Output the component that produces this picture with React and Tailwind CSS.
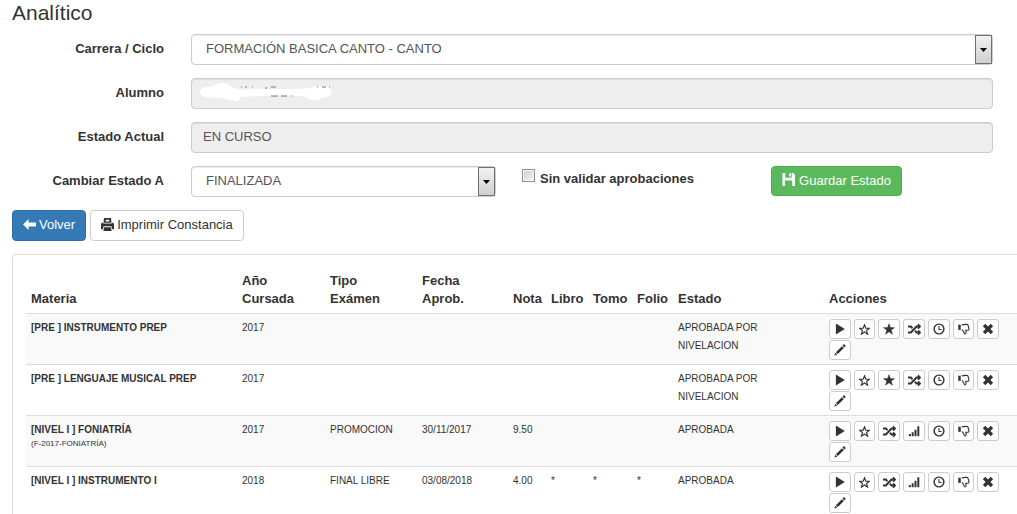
import React from "react";
import { FaRandom } from "react-icons/fa";

const Icon = ({ box = "0 0 14 14", size = "size-3", children }) => (
  <svg viewBox={box} className={`${size} shrink-0`} fill="currentColor" aria-hidden="true">
    {children}
  </svg>
);

const STAR = "M7 .8 8.6 5.3 13.4 5.4 9.6 8.3 11 13 7 10.2 3 13 4.4 8.3 .6 5.4 5.4 5.3Z";

const ICONS = {
  play: (
    <Icon>
      <path d="M2.200 .6 12.600 7 2.200 13.400Z" />
    </Icon>
  ),
  starEmpty: (
    <Icon size="size-[11px]">
      <path d={STAR} fill="none" stroke="currentColor" strokeWidth="1.400" />
    </Icon>
  ),
  star: (
    <Icon>
      <path d={STAR} stroke="currentColor" strokeWidth=".6" />
    </Icon>
  ),
  random: <FaRandom className="size-[13px]" aria-hidden="true" />,
  signal: (
    <Icon>
      <path d="M1 10.500h2.300V13H1zM4.300 8.500h2.300V13H4.300zM7.600 5.500h2.300V13H7.600zM10.900 1.500h2.300V13h-2.300z" />
    </Icon>
  ),
  time: (
    <Icon>
      <circle cx="7" cy="7" r="5.700" fill="none" stroke="currentColor" strokeWidth="1.700" />
      <path d="M7 3.500V7.500H10" fill="none" stroke="currentColor" strokeWidth="1.200" />
    </Icon>
  ),
  thumbsDown: (
    <Icon>
      <path d="M.3 2h2.900v6H.3z" />
      <path
        d="M4.500 2.200C6 1.600 7.500 1.500 9.800 1.600 11.600 1.700 12 2.400 11.800 3.500 12.700 4.200 12.700 5 12.300 5.700 13.300 6.600 13 8.500 11.300 8.500H9C9.700 10 9.700 12.600 8.200 12.800 6.800 12.800 7.400 11.200 6.500 10.200 5.700 9.200 5.400 8 4.500 7.700"
        fill="none"
        stroke="currentColor"
        strokeWidth="1.300"
      />
    </Icon>
  ),
  remove: (
    <Icon>
      <path d="M3.800 1 7 4.200 10.200 1 13 3.800 9.800 7 13 10.200 10.200 13 7 9.800 3.800 13 1 10.200 4.200 7 1 3.800Z" />
    </Icon>
  ),
  pencil: (
    <Icon>
      <path d="M.5 13.500 1.500 10.200 3.800 12.500ZM2.200 9.500 9.200 2.500 11.500 4.800 4.500 11.800ZM9.900 1.800 11 .7Q11.600.1 12.300.7L13.300 1.700Q13.900 2.400 13.300 3L12.200 4.100Z" />
    </Icon>
  ),
};

const LABELS = {
  play: "Iniciar",
  starEmpty: "Regularizar",
  star: "Aprobar",
  random: "Equivalencia",
  signal: "Nivelar",
  time: "Historial",
  thumbsDown: "Desaprobar",
  remove: "Eliminar",
  pencil: "Editar",
};

const PRE_ACTIONS = ["play", "starEmpty", "star", "random", "time", "thumbsDown", "remove", "pencil"];
const LEVEL_ACTIONS = ["play", "starEmpty", "random", "signal", "time", "thumbsDown", "remove", "pencil"];

const ROWS = [
  { materia: "[PRE ] INSTRUMENTO PREP", cells: ["2017", "", "", "", "", "", "", "APROBADA POR NIVELACION"], actions: PRE_ACTIONS },
  { materia: "[PRE ] LENGUAJE MUSICAL PREP", cells: ["2017", "", "", "", "", "", "", "APROBADA POR NIVELACION"], actions: PRE_ACTIONS },
  { materia: "[NIVEL I ] FONIATRÍA", nota: "(F-2017-FONIATRÍA)", cells: ["2017", "PROMOCION", "30/11/2017", "9.50", "", "", "", "APROBADA"], actions: LEVEL_ACTIONS },
  { materia: "[NIVEL I ] INSTRUMENTO I", cells: ["2018", "FINAL LIBRE", "03/08/2018", "4.00", "*", "*", "*", "APROBADA"], actions: LEVEL_ACTIONS },
];

const COLUMNS = [
  ["Materia", "w-[211px]"],
  ["Año Cursada", "w-[88px] pr-4"],
  ["Tipo Exámen", "w-[92px] pr-4"],
  ["Fecha Aprob.", "w-[91px] pr-4"],
  ["Nota", "w-[38px]"],
  ["Libro", "w-[42px]"],
  ["Tomo", "w-[44px]"],
  ["Folio", "w-[41px]"],
  ["Estado", "w-[151px]"],
  ["Acciones", ""],
];

const field = "h-[31px] w-full rounded border border-[#ccc] text-[13px] text-[#555] shadow-[inset_0_1px_1px_rgba(0,0,0,0.075)]";

function Field({ id, label, children }) {
  return (
    <div className="flex gap-[27px]">
      <label htmlFor={id} className="w-[152px] shrink-0 pt-1.5 text-right font-bold">
        {label}
      </label>
      <div className="min-w-0 flex-1">{children}</div>
    </div>
  );
}

function Select({ id, value }) {
  return (
    <div className="relative">
      <select id={id} defaultValue={value} className={`${field} block appearance-none bg-white pb-0.5 pl-[14px] pr-6`}>
        <option>{value}</option>
      </select>
      <span className="pointer-events-none absolute inset-y-px right-px flex w-[17px] items-center justify-center border border-[#707070] bg-linear-to-b from-[#f2f2f2] to-[#cfcfcf]">
        <svg viewBox="0 0 7 4" className="h-1 w-[7px]" aria-hidden="true">
          <path d="M0 0h7L3.500 4Z" fill="#000" />
        </svg>
      </span>
    </div>
  );
}

export default function App() {
  return (
    <main className="overflow-hidden bg-white pl-3 font-['Liberation_Sans',Arial,sans-serif] text-[13px] leading-[18px] text-[#333]">
      <h1 className="pt-px text-[21px] leading-6">Analítico</h1>

      <form className="mt-[9px] flex flex-col gap-[13px] pr-6" onSubmit={(e) => e.preventDefault()}>
        <Field id="carrera" label="Carrera / Ciclo">
          <Select id="carrera" value="FORMACIÓN BASICA CANTO - CANTO" />
        </Field>
        <Field id="alumno" label="Alumno">
          <div className="relative">
            <input id="alumno" disabled className={`${field} block bg-[#eee] px-[11px]`} />
            <svg viewBox="0 0 134 20" className="pointer-events-none absolute left-2 top-1 h-5 w-[134px]" aria-hidden="true">
              <path
                d="M1 10Q1 6 6 5Q12 6 16 3Q23 -1 28 2Q33 6 40 7L42 8Q60 6 72 7L90 7Q108 7 114 5Q124 3 130 5Q134 8 132 12Q131 15 125 15Q117 20 111 17Q105 13 98 14Q88 13 82 14L66 14Q54 14 41 15Q41 20 36 19Q26 17 20 16L6 15Q1 14 1 10Z"
                fill="#fff"
              />
              <path d="M42 5h1M46 5h2M53 5h1M66 6h2M72 5h5M118 5h1M123 5h4M130 5h1M72 14h7M82 14h6M92 14h1" stroke="#777" strokeWidth="1" />
            </svg>
          </div>
        </Field>
        <Field id="estado" label="Estado Actual">
          <input id="estado" disabled defaultValue="EN CURSO" className={`${field} block bg-[#eee] px-[11px] pb-0.5`} />
        </Field>
        <Field id="cambiar" label="Cambiar Estado A">
          <div className="grid grid-cols-[305px_223px_auto] items-start gap-x-[26px]">
            <Select id="cambiar" value="FINALIZADA" />
            <label className="flex items-center gap-[5px] pt-[3px] font-bold">
              <input
                type="checkbox"
                className="mb-1.5 size-[13px] appearance-none border border-[#8e8f8f] bg-linear-to-br from-[#c8ccd0] to-[#f6f6f6] shadow-[inset_0_0_0_1px_#f4f4f4] checked:from-[#337ab7] checked:to-[#337ab7]"
              />
              Sin validar aprobaciones
            </label>
            <button type="submit" className="flex h-[30px] w-[131px] items-center justify-center gap-1 rounded border border-[#4cae4c] bg-[#5cb85c] text-white">
              <Icon size="size-[13px] mb-[3px]">
                <path fillRule="evenodd" d="M.5 0H3.500V5H10.500V0H12L14 2V14H11V8H3V14H.5ZM7.800 .3H9.600V3.800H7.800Z" />
              </Icon>
              Guardar Estado
            </button>
          </div>
        </Field>
      </form>

      <div className="mt-[13px] flex gap-1">
        <a href="#volver" className="flex h-[31px] items-center gap-[3px] rounded border border-[#2e6da4] bg-[#337ab7] px-2.5 pb-0.5 text-white">
          <Icon size="size-[13px]">
            <path d="M0 7 6 1V4.800H14V9.200H6V13Z" />
          </Icon>
          Volver
        </a>
        <button type="button" className="flex h-[31px] items-center gap-[3px] rounded border border-[#ccc] bg-white px-2.5 pb-0.5">
          <Icon size="size-[13px]">
            <path fillRule="evenodd" d="M3.200 0H10.800L11.300 5H2.700ZM5.200 1.800 5 3.800H9L8.800 1.800ZM1 5H2L2.500 6H11.500L12 5H13Q14 5.500 14 7V12H12L11.200 9H2.800L2 12H0V7Q0 5.500 1 5ZM3.300 10H10.700L11.500 14H2.500Z" />
          </Icon>
          Imprimir Constancia
        </button>
      </div>

      <section className="mt-[13px] rounded-tl border-l border-t border-[#ddd] pl-[13px] pt-3">
        <table className="w-full table-fixed border-collapse">
          <thead>
            <tr className="border-b border-[#ddd]">
              {COLUMNS.map(([name, width]) => (
                <th key={name} scope="col" className={`${width} py-[5px] pl-[5px] text-left align-bottom`}>
                  {name}
                </th>
              ))}
            </tr>
          </thead>
          <tbody className="text-[10px]">
            {ROWS.map((row) => (
              <tr key={row.materia} className="border-b border-[#ddd] align-top odd:bg-[#f9f9f9] last:border-b-0">
                <td className="pl-[5px] pt-[5px]">
                  <strong className="block">{row.materia}</strong>
                  {row.nota && <small className="block text-[8px] leading-[10px]">{row.nota}</small>}
                </td>
                {row.cells.map((text, i) => (
                  <td key={i} className={i === 7 ? "pl-[5px] pr-[50px] pt-[5px]" : "pl-[5px] pt-[5px]"}>
                    {text}
                  </td>
                ))}
                <td className="px-[5px] pb-1 pt-[5px]">
                  <div className="flex max-w-[180px] flex-wrap gap-x-[3px] gap-y-px">
                    {row.actions.map((name) => (
                      <button
                        key={name}
                        type="button"
                        aria-label={LABELS[name]}
                        className={`${name === "starEmpty" || name === "thumbsDown" ? "w-[21px]" : "w-[22px]"} flex h-5 items-center justify-center rounded-[3px] border border-[#ccc] bg-white`}
                      >
                        {ICONS[name]}
                      </button>
                    ))}
                  </div>
                </td>
              </tr>
            ))}
          </tbody>
        </table>
      </section>
    </main>
  );
}
